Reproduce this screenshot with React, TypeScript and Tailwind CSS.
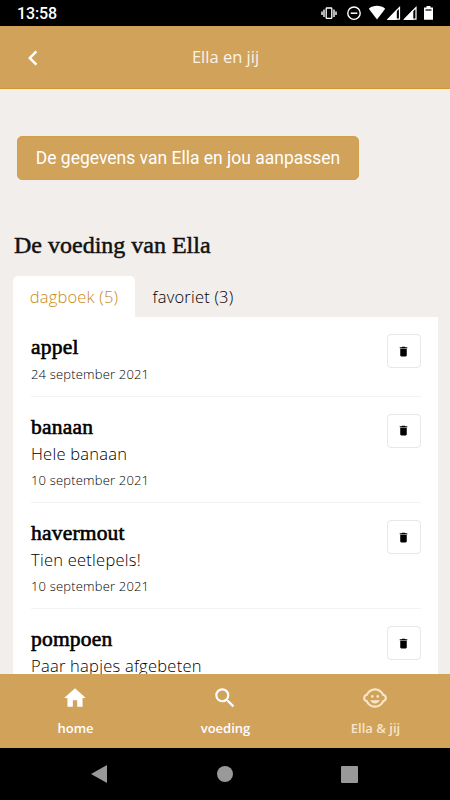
import { MdChevronLeft, MdDelete, MdHome, MdSearch, MdChildCare } from "react-icons/md";
import clsx from "clsx";

type Entry = { name: string; note?: string; date: string };

const entries: Entry[] = [
  { name: "appel", date: "24 september 2021" },
  { name: "banaan", note: "Hele banaan", date: "10 september 2021" },
  { name: "havermout", note: "Tien eetlepels!", date: "10 september 2021" },
  { name: "pompoen", note: "Paar hapjes afgebeten", date: "10 september 2021" },
];

function StatusBar() {
  return (
    <div className="flex h-[26px] shrink-0 items-center justify-between bg-black pl-[17px] text-white">
      <span className="pt-[2px] font-['Roboto',sans-serif] text-[16px] leading-[26px] font-medium tracking-[-0.1px]">
        13:58
      </span>
      <svg width="134" height="26" viewBox="316 0 134 26" fill="none" stroke="#fff">
        {/* vibrate */}
        <rect x="326.2" y="8" width="5.6" height="10.4" rx="0.6" strokeWidth="1.3" />
        <path d="M324 9.500v7.500M322 11.500v3.500M334 9.500v7.500M336 11.500v3.500" strokeWidth="1.4" />
        {/* do not disturb */}
        <circle cx="354" cy="13.2" r="6.2" strokeWidth="1.4" />
        <path d="M350.7 13.2h6.6" strokeWidth="1.5" />
        {/* wifi */}
        <path d="M368.8 8.7C373.500 4.900 380.500 4.900 385.200 8.700L377 19.500Z" fill="#fff" stroke="none" />
        {/* two sim signals */}
        <path d="M399.500 7.500V19.200H388.200Z" strokeWidth="1.2" />
        <path d="M386.800 20L396.800 9.500V20Z" fill="#fff" stroke="none" />
        <path d="M416 7.500V19.200H404.700Z" strokeWidth="1.2" />
        <path d="M403.300 20L413.300 9.500V20Z" fill="#fff" stroke="none" />
        {/* battery */}
        <path d="M426.500 6h4v1.500h2.500V19.700h-9V7.500h2.500Z" fill="#fff" stroke="none" />
        <path d="M425.500 10h6" stroke="#000" strokeWidth="1.2" />
      </svg>
    </div>
  );
}

function EntryRow({ name, note, date }: Entry) {
  return (
    <li className="flex justify-between border-b border-[#f3f3f3] pt-[17px] pb-[8.800px] font-['Open_Sans',sans-serif] leading-[26.500px] whitespace-nowrap text-black">
      <div className="pl-[0.500px]">
        <h3 className="font-['Liberation_Serif',serif] text-[21.500px] tracking-[0.200px] [-webkit-text-stroke:0.600px_#000]">
          {name}
        </h3>
        {note && <p className="pt-[0.500px] text-[16.500px] leading-[26px] font-light tracking-[0.250px]">{note}</p>}
        <p className="pt-px text-[13px] leading-[25.500px] font-light tracking-[0.180px]">{date}</p>
      </div>
      <button className="flex size-[34px] items-center justify-center rounded-[4px] border-[1.500px] border-[#e8e8e8] bg-white pr-px">
        <MdDelete size={13} />
      </button>
    </li>
  );
}

function NavItem({
  icon: Icon,
  label,
  active,
}: {
  icon: React.ElementType;
  label: string;
  active?: boolean;
}) {
  return (
    <a
      className={clsx(
        "flex flex-1 flex-col items-center pt-[11px] font-['Open_Sans',sans-serif] text-[13px] leading-[18px] font-semibold",
        active ? "text-[#f7e6c8]" : "text-white",
      )}
    >
      <Icon size={26} />
      <span className="mt-2 pl-px">{label}</span>
    </a>
  );
}

export default function App() {
  return (
    <div className="flex h-[800px] w-[450px] flex-col overflow-hidden bg-[#f2eeeb]">
      <StatusBar />

      <header className="grid h-[63px] shrink-0 grid-cols-[1fr_auto_1fr] items-center border-b border-[#d0982f] bg-[#d1a25a] text-white">
        <MdChevronLeft size={30} className="mt-px ml-[17.500px]" />
        <h1 className="pt-px pl-px font-['Open_Sans',sans-serif] text-[16.500px] font-normal text-[#faf3e8]">
          Ella en jij
        </h1>
      </header>

      <main className="min-h-0 flex-1 overflow-hidden pt-[47px] pr-3 pl-[13px]">
        <button className="ml-1 h-11 w-[342px] rounded-[5px] border border-[#d29f4e] bg-[#d1a25a] font-['Roboto',sans-serif] text-[17.500px] whitespace-nowrap text-white">
          De gegevens van Ella en jou aanpassen
        </button>

        <h2 className="mt-[50px] pl-px font-['Liberation_Serif',serif] text-[24px] leading-[30px] whitespace-nowrap text-[#111] [-webkit-text-stroke:0.500px_#111]">
          De voeding van Ella
        </h2>

        <div className="mt-4 flex h-[41px] font-['Open_Sans',sans-serif] text-[16.500px] leading-[42px] font-light tracking-[0.200px] whitespace-nowrap">
          <button className="w-[122px] rounded-t-[5px] bg-white text-[#c88a18]">dagboek (5)</button>
          <button className="w-[116px] text-black">favoriet (3)</button>
        </div>

        <ul className="bg-white pr-[17px] pl-[17.500px]">
          {entries.map((entry) => (
            <EntryRow key={entry.name} {...entry} />
          ))}
        </ul>
      </main>

      <nav className="flex h-[74px] shrink-0 bg-[#d1a25a]">
        <NavItem icon={MdHome} label="home" />
        <NavItem icon={MdSearch} label="voeding" />
        <NavItem icon={MdChildCare} label="Ella & jij" active />
      </nav>

      <div className="flex h-[52px] shrink-0 items-center bg-black pl-[91px]">
        <svg width="16" height="18" viewBox="0 0 16 18" fill="#999">
          <path d="M0 9L16 0V18Z" />
        </svg>
        <div className="ml-[110px] size-4 rounded-full bg-[#999]" />
        <div className="ml-[108px] size-[17px] rounded-[1px] bg-[#999]" />
      </div>
    </div>
  );
}
